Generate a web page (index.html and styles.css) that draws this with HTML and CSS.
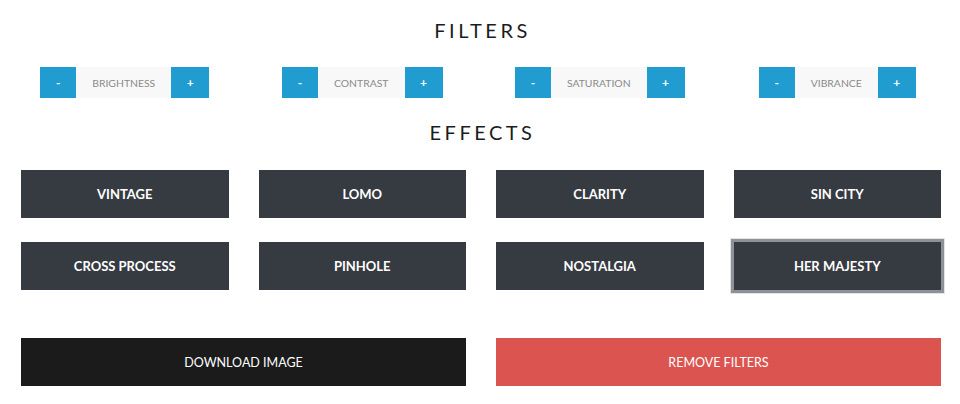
FILE: index.html
```html
<!DOCTYPE html>
<html>
<head>
<meta charset="utf-8">
<link rel="stylesheet" href="styles.css">
</head>
<body>
<div class="page">
  <h2 class="title title-filters">FILTERS</h2>
  <div class="filters">
    <div class="cell"><div class="group"><button class="step minus">-</button><span class="label">BRIGHTNESS</span><button class="step plus">+</button></div></div>
    <div class="cell"><div class="group"><button class="step minus">-</button><span class="label">CONTRAST</span><button class="step plus">+</button></div></div>
    <div class="cell"><div class="group"><button class="step minus">-</button><span class="label">SATURATION</span><button class="step plus">+</button></div></div>
    <div class="cell"><div class="group"><button class="step minus">-</button><span class="label">VIBRANCE</span><button class="step plus">+</button></div></div>
  </div>
  <h2 class="title title-effects">EFFECTS</h2>
  <div class="effects">
    <button class="effect">VINTAGE</button>
    <button class="effect">LOMO</button>
    <button class="effect">CLARITY</button>
    <button class="effect">SIN CITY</button>
    <button class="effect">CROSS PROCESS</button>
    <button class="effect">PINHOLE</button>
    <button class="effect">NOSTALGIA</button>
    <button class="effect active">HER MAJESTY</button>
  </div>
  <div class="actions">
    <button class="action download">DOWNLOAD IMAGE</button>
    <button class="action remove">REMOVE FILTERS</button>
  </div>
</div>
</body>
</html>
```
FILE: styles.css
```css
* { box-sizing: border-box; }
body {
  margin: 0;
  background: #ffffff;
  font-family: "Lato", "Noto Sans", sans-serif;
}
.page {
  padding: 0 19px 0 21px;
}
button {
  font-family: inherit;
  border: 0;
  margin: 0;
  cursor: pointer;
}
.title {
  margin: 0;
  font-size: 20px;
  line-height: 24px;
  font-weight: 400;
  letter-spacing: 3.5px;
  text-align: center;
  color: #1c1c1c;
  padding-left: 3px;
}
.title-filters { padding-top: 18px; }
.title-effects { margin-top: 22px; }

.filters {
  margin-top: 25px;
  display: grid;
  grid-template-columns: repeat(4, 1fr);
  column-gap: 30px;
}
.cell {
  display: flex;
  justify-content: center;
}
.group {
  display: flex;
  height: 31px;
}
.step {
  background: #209cd1;
  color: #ffffff;
  font-size: 12px;
  font-weight: 700;
  padding: 0;
  height: 31px;
}
.minus { width: 36px; }
.plus { width: 38px; }
.label {
  background: #f8f8f8;
  color: #8a8a8a;
  font-size: 10.4px;
  padding: 0 16px;
  display: flex;
  align-items: center;
}

.effects {
  margin-top: 26px;
  display: grid;
  grid-template-columns: repeat(4, 1fr);
  column-gap: 30px;
  row-gap: 24px;
}
.effect {
  height: 48px;
  background: #363a41;
  color: #ffffff;
  font-size: 13px;
  font-weight: 700;
}
.effect.active {
  box-shadow: 0 0 0 3px #8e9297, 0 0 0 4px #e2e3e4;
}

.actions {
  margin-top: 48px;
  display: grid;
  grid-template-columns: 1fr 1fr;
  column-gap: 30px;
}
.action {
  height: 48px;
  color: #ffffff;
  font-size: 12.5px;
  font-weight: 400;
}
.download { background: #1b1b1b; }
.remove { background: #db5450; }
```
